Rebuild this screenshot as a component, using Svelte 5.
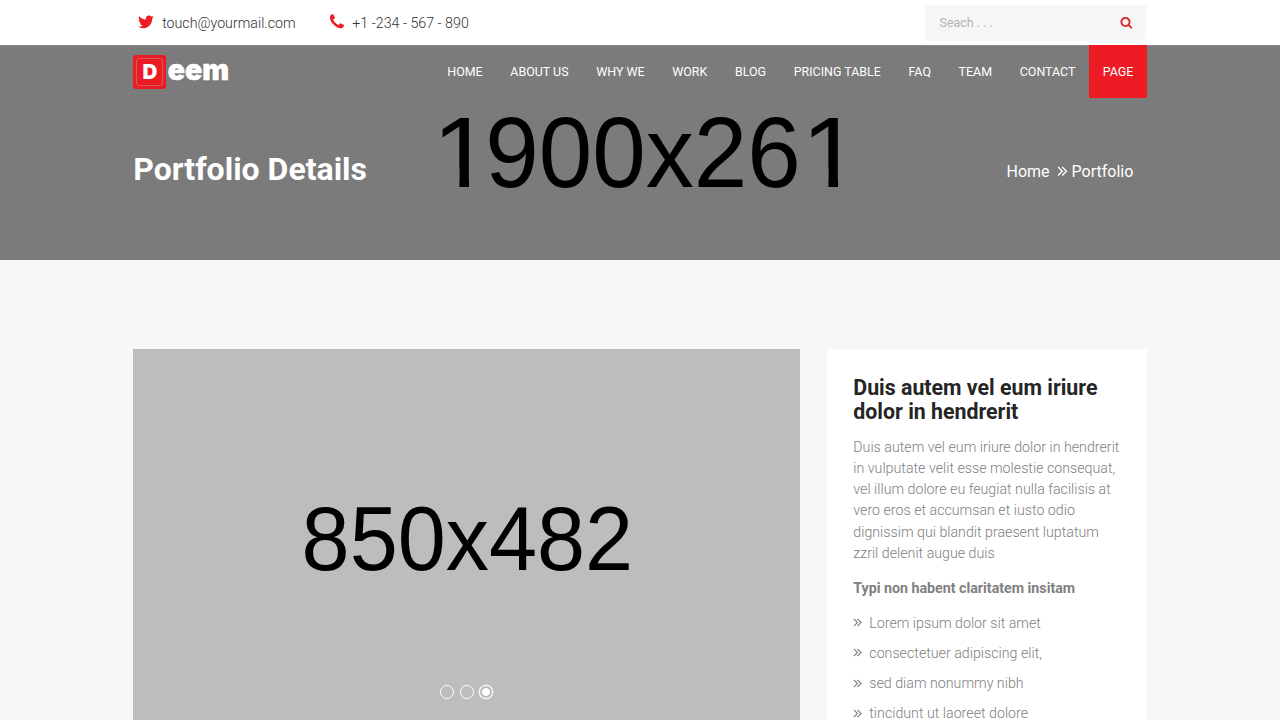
<script>
  const nav = ['Home', 'About us', 'Why we', 'Work', 'Blog', 'Pricing table', 'FAQ', 'Team', 'Contact', 'Page'];
  const points = [
    'Lorem ipsum dolor sit amet',
    'consectetuer adipiscing elit,',
    'sed diam nonummy nibh',
    'tincidunt ut laoreet dolore'
  ];
  const slides = [0, 1, 2];
  let current = $state(2);
</script>

{#snippet chevrons(cls)}
  <svg class={cls} viewBox="0 0 10 10" aria-hidden="true">
    <path d="M1 1L5 5L1 9M5 1L9 5L5 9" fill="none" stroke="currentColor" stroke-width="1.3" />
  </svg>
{/snippet}

<div class="page">
  <div class="topbar">
    <div class="container topbar-row">
      <div class="contact mail">
        <svg viewBox="0 0 1792 1792" aria-hidden="true"><path d="M1684 408q-67 98-162 167 1 14 1 42 0 130-38 259.5t-115.5 248.5-184.5 210.5-258 146-323 54.5q-271 0-496-145 35 4 78 4 225 0 401-138-105-2-188-64.5t-114-159.5q33 5 61 5 43 0 85-11-112-23-185.5-111.5t-73.5-205.5v-4q68 38 146 41-66-44-105-115t-39-154q0-88 44-163 121 149 294.5 238.5t371.5 99.5q-8-38-8-74 0-134 94.5-228.5t228.5-94.5q140 0 236 102 109-21 205-78-37 115-142 178 93-10 186-50z" /></svg>
        <span>touch@yourmail.com</span>
      </div>
      <div class="contact phone">
        <svg viewBox="0 0 1792 1792" aria-hidden="true"><path d="M1600 1240q0 27-10 70.5t-21 68.5q-21 50-122 106-94 51-186 51-27 0-53-3.5t-57-12.5-47-14.5-55.5-20.5-49.5-18q-98-35-175-83-127-79-264-216t-216-264q-48-77-83-175-3-9-18-49.5t-20.5-55.5-14.5-47-12.5-57-3.5-53q0-92 51-186 56-101 106-122 25-11 68.5-21t70.5-10q14 0 21 3 18 6 53 76 11 19 30 54t35 63.5 31 53.5q3 4 17.5 25t21.5 35.5 7 28.5q0 20-28.5 50t-62 55-62 53-28.5 46q0 9 5 22.5t8.5 20.5 14 24 11.5 19q76 137 174 235t235 174q2 1 19 11.5t24 14 20.5 8.5 22.5 5q18 0 46-28.5t53-62 55-62 50-28.5q14 0 28.5 7t35.5 21.5 25 17.5q25 15 53.5 31t63.5 35 54 30q70 35 76 53 3 7 3 21z" /></svg>
        <span>+1 -234 - 567 - 890</span>
      </div>
      <div class="search">
        <span>Seach . . .</span>
        <svg viewBox="0 0 1792 1792" aria-hidden="true"><path d="M1216 832q0-185-131.5-316.5t-316.5-131.5-316.5 131.5-131.5 316.5 131.5 316.5 316.5 131.5 316.5-131.5 131.5-316.5zm512 832q0 52-38 90t-90 38q-54 0-90-38l-343-342q-179 124-399 124-143 0-273.5-55.5t-225-150-150-225-55.5-273.5 55.5-273.5 150-225 225-150 273.5-55.5 273.5 55.5 225 150 150 225 55.5 273.5q0 220-124 399l343 343q37 37 37 90z" /></svg>
      </div>
    </div>
  </div>

  <header class="hero">
    <div class="placeholder hero-placeholder"><span class="one">1</span>900x26<span class="one">1</span></div>
    <div class="container menu-row">
      <div class="logo">
        <span class="badge"><span class="ring">D</span></span>
        <span class="word">eem</span>
      </div>
      <nav>
        {#each nav as item, i}
          <a href="#top" class:active={i === nav.length - 1}>{item}</a>
        {/each}
      </nav>
    </div>
    <div class="container title-row">
      <h1>Portfolio Details</h1>
      <div class="crumbs"><span>Home</span>{@render chevrons('crumb-icon')}<span>Portfolio</span></div>
    </div>
  </header>

  <main class="container content">
    <section class="gallery">
      <div class="placeholder">850x482</div>
      <div class="dots">
        {#each slides as s}
          <button class:on={current === s} aria-label={`Slide ${s + 1}`} onclick={() => (current = s)}></button>
        {/each}
      </div>
    </section>
    <aside>
      <h2>Duis autem vel eum iriure dolor in hendrerit</h2>
      <p>Duis autem vel eum iriure dolor in hendrerit in vulputate velit esse molestie consequat, vel illum dolore eu feugiat nulla facilisis at vero eros et accumsan et iusto odio dignissim qui blandit praesent luptatum zzril delenit augue duis</p>
      <h3>Typi non habent claritatem insitam</h3>
      <ul>
        {#each points as point}
          <li>{@render chevrons('point-icon')}<span>{point}</span></li>
        {/each}
      </ul>
    </aside>
  </main>
</div>

<style>
  :global(body) { margin: 0; overflow: hidden; }
  .page {
    height: 720px;
    overflow: hidden;
    background: #f7f7f7;
    font-family: Roboto, 'Liberation Sans', sans-serif;
    font-size: 14.22px;
    color: #808080;
  }
  .page, .page * { box-sizing: border-box; }
  .container { width: 1013.33px; margin: 0 auto; }
  .topbar { height: 45px; background: #fff; }
  .topbar-row { display: flex; height: 45px; align-items: center; color: #333; }
  .contact { display: flex; align-items: center; font-weight: 300; white-space: nowrap; }
  .contact svg { width: 17.8px; height: 17.8px; margin-bottom: 2px; fill: #ed1c24; flex: none; }
  .mail { margin-left: 3.5px; width: 191.3px; gap: 7.5px; }
  .phone { gap: 6.4px; }
  .contact span { padding-top: 1px; }
  .search {
    display: flex;
    align-items: center;
    justify-content: space-between;
    width: 222.7px;
    height: 37px;
    margin: 0 0 0 auto;
    padding: 0 12.2px 0 13.6px;
    border: 2px solid #fbfbfb;
    background: #f6f6f6;
    color: #b4b4b4;
    font-size: 12.44px;
  }
  .search svg { width: 12.8px; height: 12.8px; fill: #dd2026; }

  .hero { position: relative; height: 215px; background: #7b7b7b; border-top: 1px solid #8b8b8b; color: #fff; }
  .placeholder {
    color: #000;
    font-family: 'Liberation Sans', Arial, sans-serif;
    line-height: 1;
    white-space: nowrap;
    transform: scaleY(1.045);
    transform-origin: 50% 84.65%;
  }
  .hero-placeholder { position: absolute; left: 6px; right: 0; top: 59.5px; text-align: center; font-size: 96.2px; }
  /* footless numeral: only the flag and the stem stay visible */
  .one {
    display: inline-block;
    width: 0.556em;
    clip-path: polygon(0 0, 100% 0, 100% 65%, 61.2% 65%, 61.2% 100%, 45.2% 100%, 45.2% 65%, 0 65%);
    transform: translateX(0.0036em) scaleX(1.119);
    transform-origin: 0 0;
  }
  .menu-row { position: relative; display: flex; justify-content: space-between; height: 53px; margin-top: -1px; }
  .logo { display: flex; align-items: center; height: 53px; }
  .badge { width: 33px; height: 34px; padding: 3px; border-radius: 3px; background: #ed1c24; }
  .ring {
    display: flex; align-items: center; justify-content: center;
    height: 28px; border: 1px solid #cf5c60; border-radius: 3px;
    font: 900 20.5px/28px Inter, sans-serif;
    padding-top: 1px;
  }
  .word { margin: -4px 0 0 1.5px; font: 900 28.4px/34px Inter, sans-serif; -webkit-text-stroke: 0.5px #fff; }
  nav { display: flex; }
  nav a {
    display: flex; align-items: center; height: 53.4px; padding: 0 13.83px 0.5px;
    color: #fff; font-size: 12.44px; text-decoration: none; text-transform: uppercase;
  }
  nav a.active { padding-left: 13.5px; padding-right: 13.3px; background: #ed1c24; }
  .title-row { position: relative; display: flex; justify-content: space-between; align-items: center; margin-top: 50px; height: 42px; }
  h1 { margin: 0; font-size: 32px; font-weight: 700; line-height: 42px; }
  .crumbs { display: flex; align-items: center; padding: 4px 13.3px 0 0; font-size: 16px; }
  .crumbs :global(.crumb-icon) { width: 10.5px; height: 10.5px; margin: 0 4px 0 7.5px; }

  .content { display: flex; gap: 26.67px; margin-top: 89px; }
  .gallery { display: flex; flex-direction: column; align-items: center; width: 666.67px; height: 378px; background: #bdbdbd; padding-top: 147.5px; }
  .gallery .placeholder { margin-left: 1.4px; font-size: 86.4px; }
  .dots { display: flex; gap: 5.3px; margin-top: 102px; }
  .dots button { width: 14.2px; height: 14.2px; padding: 0; border: 1px solid #fff; border-radius: 50%; background: none; }
  .dots button.on { border-width: 1.5px; background: radial-gradient(circle, #fff 3.6px, transparent 4.2px); box-shadow: 0 0 0 0.4px #fff; }
  aside { width: 320px; height: 440px; padding: 27px 26.67px; background: #fff; }
  h2 { margin: 0; color: #252525; font-size: 21.33px; font-weight: 700; line-height: 23.7px; }
  p { margin: 13.1px 0 0; font-weight: 300; line-height: 21.33px; }
  h3 { margin: 13.4px 0 0; font-size: 14.22px; font-weight: 700; line-height: 21.33px; }
  ul { margin: 8.5px 0 0; padding: 0; list-style: none; }
  li { display: flex; align-items: center; height: 30.2px; font-weight: 300; }
  li :global(.point-icon) { width: 9px; height: 9px; margin-right: 7px; }
</style>
